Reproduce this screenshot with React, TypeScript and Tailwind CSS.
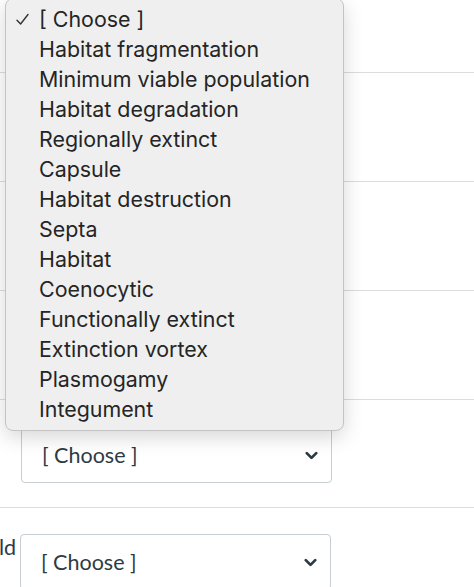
import { ChevronDown } from 'lucide-react'

const options = [
  '[ Choose ]',
  'Habitat fragmentation',
  'Minimum viable population',
  'Habitat degradation',
  'Regionally extinct',
  'Capsule',
  'Habitat destruction',
  'Septa',
  'Habitat',
  'Coenocytic',
  'Functionally extinct',
  'Extinction vortex',
  'Plasmogamy',
  'Integument',
]

function SelectBox() {
  return (
    <div className="w-[311px] h-[56px] shrink-0 rounded-[4px] border border-[#c7cdd1] bg-white flex items-center justify-between pl-[20px] pr-[6px]">
      <span className="text-[21.5px] text-[#2d3b45]" style={{ fontFamily: 'Lato, sans-serif' }}>[ Choose ]</span>
      <ChevronDown size={19} strokeWidth={3.5} className="text-[#2d3b45] mr-[4px]" />
    </div>
  )
}

export default function App() {
  return (
    <div className="relative w-[474px] h-[587px] overflow-hidden bg-white" style={{ fontFamily: 'Lato, sans-serif' }}>
      <div className="h-[72px]" />
      <div className="h-[109px] border-t border-[#dcdcdc]" />
      <div className="h-[109px] border-t border-[#dcdcdc]" />
      <div className="h-[109px] border-t border-[#dcdcdc]" />
      <div className="h-[108px] border-t border-[#dcdcdc] pt-[27px] pl-[21px]">
        <SelectBox />
      </div>
      <div className="h-[120px] border-t border-[#dcdcdc] pt-[26px] flex items-start">
        <span className="w-[21px] shrink-0 text-[21.5px] leading-[22px] pt-[2px] text-[#2d3b45] -ml-[1px]">ld</span>
        <SelectBox />
      </div>

      <div className="absolute left-[5px] top-[-2px] w-[339px] rounded-[8px] border border-[#c4c4c4] bg-[#efefef] pt-[5px] pb-[6px] shadow-[0_6px_20px_rgba(0,0,0,0.16)]">
        {options.map((o, i) => (
          <div key={o} className="relative h-[30px] flex items-center pl-[33px] text-[21.4px] text-[#252525]" style={{ fontFamily: 'Inter, sans-serif' }}>
            {i === 0 && (
              <svg className="absolute left-[10px] top-[9px]" width="13" height="13" viewBox="0 0 13 13" fill="none">
                <path d="M1 7.2 L4.6 11 L12 1.5" stroke="#333" strokeWidth="1.4" strokeLinecap="round" strokeLinejoin="round" />
              </svg>
            )}
            {o}
          </div>
        ))}
      </div>
    </div>
  )
}
